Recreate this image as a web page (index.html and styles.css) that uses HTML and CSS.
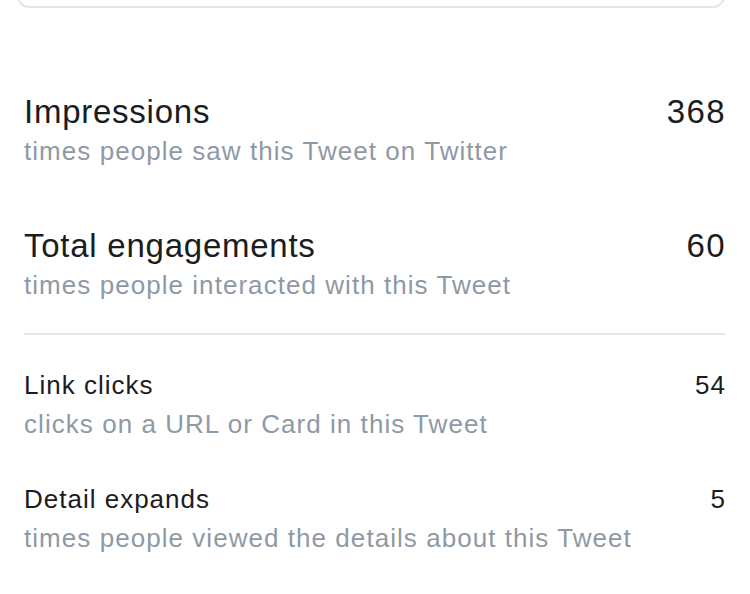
FILE: index.html
```html
<!DOCTYPE html>
<html>
<head>
    <title>Tweet activity</title>
    <link rel="stylesheet" href="styles.css">
</head>
<body>
    <div class="page">
        <div class="tweet-card"></div>

        <div class="stat stat-top first">
            <div>
                <div class="label">Impressions</div>
                <div class="desc">times people saw this Tweet on Twitter</div>
            </div>
            <div class="value">368</div>
        </div>

        <div class="stat stat-top second">
            <div>
                <div class="label">Total engagements</div>
                <div class="desc">times people interacted with this Tweet</div>
            </div>
            <div class="value">60</div>
        </div>

        <hr class="divider">

        <div class="stat stat-small third">
            <div>
                <div class="label">Link clicks</div>
                <div class="desc">clicks on a URL or Card in this Tweet</div>
            </div>
            <div class="value">54</div>
        </div>

        <div class="stat stat-small fourth">
            <div>
                <div class="label">Detail expands</div>
                <div class="desc">times people viewed the details about this Tweet</div>
            </div>
            <div class="value">5</div>
        </div>
    </div>
</body>
</html>
```

FILE: styles.css
```css
body { margin: 0; background: #fff; font-family: "Liberation Sans", Arial, sans-serif; color: #1a1c1e; }
.page { padding: 0 25px 0 24px; overflow: hidden; height: 594px; box-sizing: border-box; }

.tweet-card { margin: -20px 0 0 -7px; height: 24px; border: 2px solid #e1e6ea; border-radius: 12px; }

.stat { display: flex; justify-content: space-between; align-items: flex-start; }
.stat .desc { color: #8e99a5; font-size: 26px; line-height: 40px; letter-spacing: 1.05px; }

.stat-top .label,
.stat-top .value { font-size: 33px; line-height: 38px; letter-spacing: 0.75px; }
.stat-top .value { letter-spacing: 1.4px; }
.stat-small .label,
.stat-small .value { font-size: 26px; line-height: 38px; letter-spacing: 1px; }
.value { text-align: right; margin-right: -1px; }

.first { margin-top: 85px; }
.second { margin-top: 56px; }
.divider { border: 0; height: 2px; background: #e1e8ed; margin: 28px 0 0; }
.third { margin-top: 31px; }
.fourth { margin-top: 36px; }
```
